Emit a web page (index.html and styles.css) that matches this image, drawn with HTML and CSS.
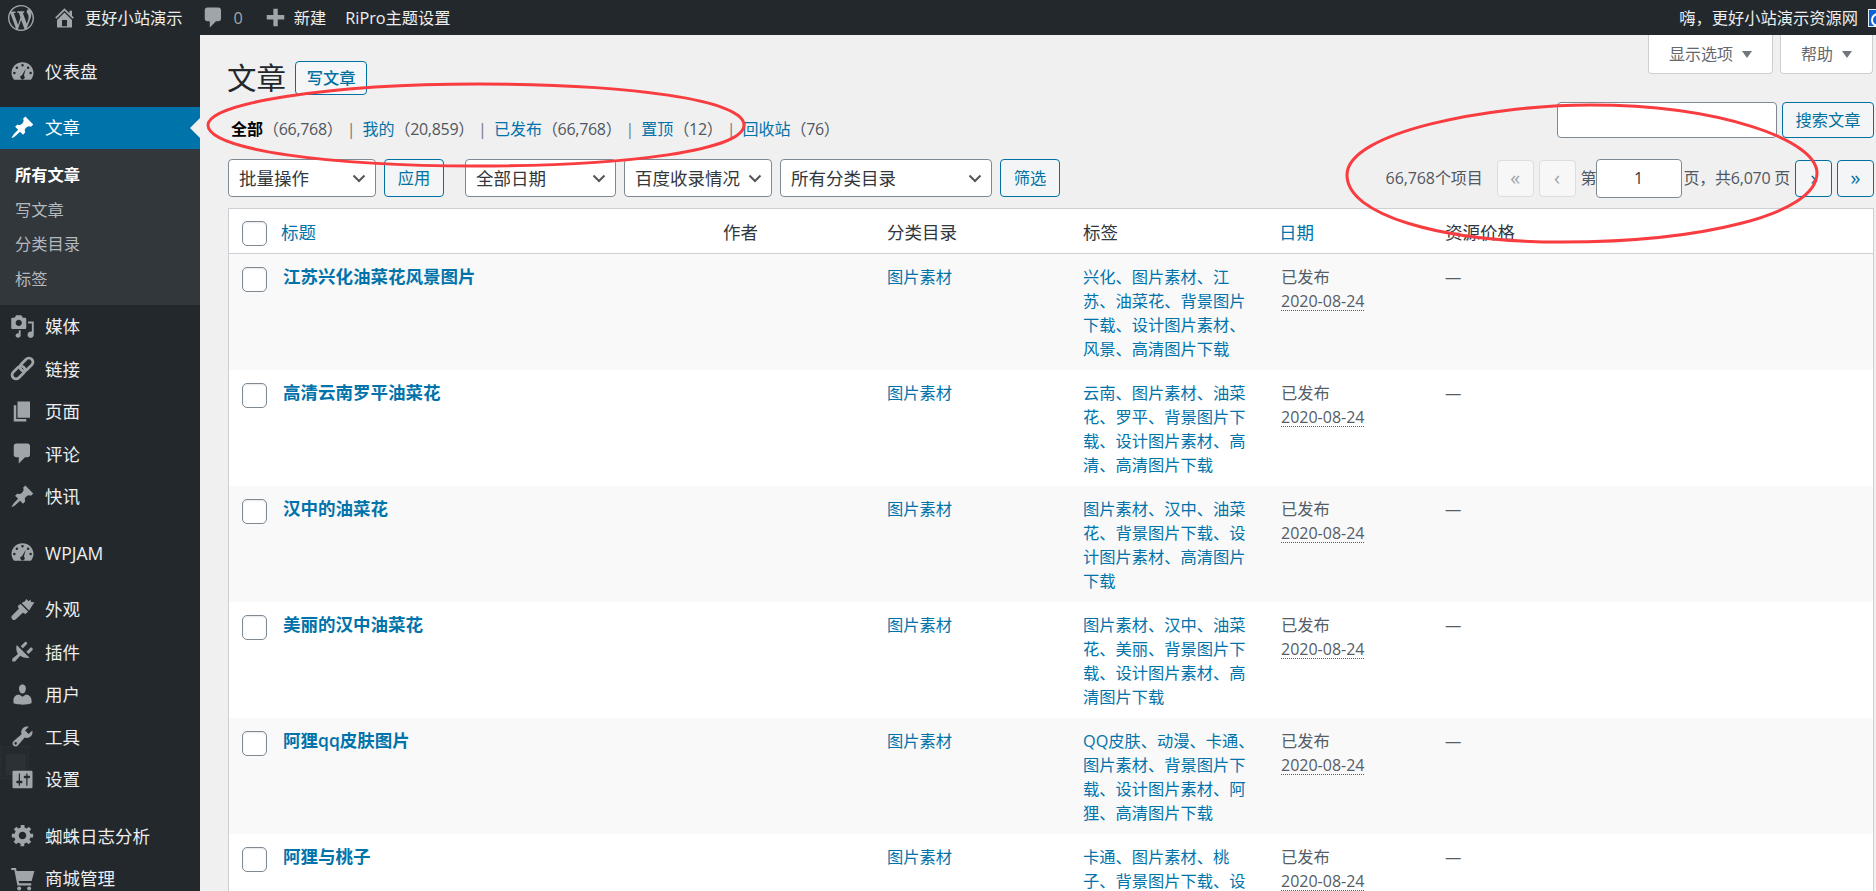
FILE: index.html
```html
<!DOCTYPE html>
<html lang="zh-CN">
<head>
<meta charset="utf-8">
<title>文章</title>
<link rel="stylesheet" href="styles.css">
</head>
<body>
<svg class="defs" width="0" height="0" aria-hidden="true">
  <symbol id="i-wp" viewBox="0 0 20 20"><path d="M20 10c0-5.510-4.490-10-10-10C4.480 0 0 4.490 0 10c0 5.520 4.480 10 10 10 5.510 0 10-4.480 10-10zM7.780 15.370L4.370 6.220c.550-.020 1.170-.080 1.170-.080.500-.060.440-1.130-.060-1.110 0 0-1.450.110-2.370.110-.180 0-.370 0-.580-.010C4.120 2.690 6.890 1.030 10 1.030c2.330 0 4.450.870 6.050 2.340-.680-.110-1.650.390-1.650 1.580 0 .740.450 1.360.900 2.100.350.610.550 1.360.550 2.460 0 1.490-1.400 5-1.400 5l-3.030-8.370c.540-.020.820-.170.820-.170.500-.050.440-1.250-.060-1.220 0 0-1.440.120-2.380.120-.870 0-2.330-.120-2.330-.120-.500-.030-.560 1.200-.060 1.220l.920.080 1.260 3.410zM17.410 10c.240-.640.740-1.870.430-4.250.700 1.290 1.050 2.710 1.050 4.250 0 3.290-1.730 6.240-4.400 7.780.970-2.590 1.940-5.200 2.920-7.780zM6.100 18.090C3.120 16.650 1.110 13.530 1.110 10c0-1.300.230-2.480.720-3.590C3.250 10.300 4.670 14.200 6.100 18.090zm4.030-6.630l2.580 6.980c-.840.300-1.740.460-2.710.460-.820 0-1.620-.110-2.370-.340.850-2.490 1.680-4.820 2.500-7.100z"/></symbol>
  <symbol id="i-home" viewBox="0 0 20 20"><path fill-rule="evenodd" d="M16 8.500l1.530 1.530-1.060 1.060L10 4.620l-6.470 6.470-1.060-1.060L10 2.500l4 4v-2h2v4zm-6-2.460l6 5.990V18H4v-5.970zM12 17v-5H8v5h4z"/></symbol>
  <symbol id="i-comment" viewBox="0 0 20 20"><path d="M5 2h9c1.100 0 2 .900 2 2v7c0 1.100-.900 2-2 2h-2l-5 5v-5H5c-1.100 0-2-.900-2-2V4c0-1.100.900-2 2-2z"/></symbol>
  <symbol id="i-plus" viewBox="0 0 20 20"><path d="M17 8v3.500h-5.200V17H8.300v-5.500H3V8h5.300V3h3.500v5z"/></symbol>
  <symbol id="i-dash" viewBox="0 0 20 20"><path fill-rule="evenodd" d="M3.300 16.500h13.400c1.300-1.500 2.100-3.400 2.100-5.500 0-4.700-3.900-8.500-8.800-8.500S1.200 6.300 1.200 11c0 2.100.800 4 2.100 5.500zM9.800 4a1 1 0 1 1 .4 2 1 1 0 0 1-.4-2zM5.500 6a1 1 0 1 1 0 2 1 1 0 0 1 0-2zM14.500 6a1 1 0 1 1 0 2 1 1 0 0 1 0-2zM3.500 10.200a1 1 0 1 1 0 2 1 1 0 0 1 0-2zM16.500 10.200a1 1 0 1 1 0 2 1 1 0 0 1 0-2zM12.600 7.800l-1.500 5.500a1.700 1.700 0 1 1-1.500-.4z"/></symbol>
  <symbol id="i-pin" viewBox="0 0 20 20"><path d="M10.440 3.020l1.820-1.820 6.360 6.350-1.830 1.820c-1.050-.680-2.480-.570-3.410.360l-.750.750c-.920.930-1.040 2.350-.350 3.410l-1.830 1.820-2.410-2.410-2.800 2.790c-.420.420-3.380 2.710-3.800 2.290s1.860-3.390 2.280-3.810l2.790-2.790L4.100 9.360l1.830-1.820c1.050.690 2.480.570 3.400-.360l.750-.750c.930-.920 1.050-2.350.360-3.410z"/></symbol>
  <symbol id="i-media" viewBox="0 0 20 20"><path fill-rule="evenodd" d="M13 11V4c0-.550-.450-1-1-1h-1.670L9 1H5L3.670 3H2c-.550 0-1 .450-1 1v7c0 .550.450 1 1 1h10c.550 0 1-.450 1-1zM7 4.500c1.380 0 2.500 1.120 2.500 2.500S8.380 9.500 7 9.500 4.500 8.380 4.500 7 5.620 4.500 7 4.500zM14.500 6H19v10.500c0 1.380-1.120 2.500-2.500 2.500S14 17.880 14 16.500s1.120-2.500 2.500-2.500c.400 0 .700.100 1 .200V7.600h-3zM8.500 13v4.200c0 1-.900 1.800-2 1.800s-2-.800-2-1.800.900-1.800 2-1.800c.200 0 .400 0 .500.100V13z"/></symbol>
  <symbol id="i-link" viewBox="0 0 20 20"><g fill="none" stroke="currentColor" stroke-width="2.200" transform="rotate(-45 10 10)"><rect x="-0.500" y="6.800" width="12" height="6.400" rx="3.200"/><rect x="8.500" y="6.800" width="12" height="6.400" rx="3.200"/></g></symbol>
  <symbol id="i-pages" viewBox="0 0 20 20"><path d="M6 15V2h10v13H6zm-1 1h8v2H3V5h2v11z"/></symbol>
  <symbol id="i-brush" viewBox="0 0 20 20"><path d="M9.300 4.700l6 6 4.200-6.500-2.600-.200-.600-2-1.400 1.300L13 1.500l-1 1.800zM8.500 5.500l6 6-2 2-2.300-1-5.700 5.500c-.700.600-1.900.500-2.700-.300s-.900-2-.300-2.700l5.600-5.700-1-2.200z"/></symbol>
  <symbol id="i-plug" viewBox="0 0 20 20"><path d="M13.500 4.200L10.300 7.400 8.600 5.700l3.200-3.200c.400-.400 1.100-.300 1.500.100s.600 1.200.200 1.600zM18 8.700l-3.200 3.200-1.700-1.700 3.200-3.200c.400-.400 1.100-.300 1.500.100s.600 1.200.200 1.600zM5.400 4.800l10.200 10.200c-1.900.600-5.200-.100-7.400-1.600L4 18H1.800v-2.200l4.500-3.900C4.900 9.700 4.700 6.700 5.400 4.800z"/></symbol>
  <symbol id="i-user" viewBox="0 0 20 20"><path d="M10 9.250c-2.270 0-2.730-3.440-2.730-3.440C7 4.020 7.820 2 9.970 2c2.160 0 2.980 2.020 2.710 3.810 0 0-.410 3.440-2.680 3.440zm0 2.570L12.720 10c2.390 0 4.520 2.330 4.520 4.530v2.490s-3.650 1.130-7.240 1.130c-3.650 0-7.240-1.130-7.240-1.130v-2.490c0-2.250 1.940-4.480 4.470-4.480z"/></symbol>
  <symbol id="i-tool" viewBox="0 0 20 20"><path fill-rule="evenodd" d="M16.680 9.770c-1.340 1.340-3.300 1.670-4.950.990l-5.410 6.520c-.990.990-2.590.990-3.570 0-.990-.990-.990-2.590 0-3.570l6.520-5.420c-.680-1.650-.350-3.610.990-4.950 1.280-1.280 3.120-1.620 4.720-1.060l-2.890 2.890 2.820 2.820 2.860-2.870c.530 1.580.180 3.390-1.090 4.650zM3.810 16.210c.400.390 1.030.390 1.420 0 .400-.400.400-1.030 0-1.430-.390-.390-1.020-.390-1.420 0-.390.400-.390 1.030 0 1.430z"/></symbol>
  <symbol id="i-set" viewBox="0 0 20 20"><path fill-rule="evenodd" d="M18 16V4c0-.550-.450-1-1-1H3c-.550 0-1 .450-1 1v12c0 .550.450 1 1 1h14c.550 0 1-.450 1-1zM8 11h1c.550 0 1 .450 1 1s-.450 1-1 1H8v1.500c0 .280-.220.500-.500.500s-.500-.220-.500-.500V13H6c-.550 0-1-.450-1-1s.450-1 1-1h1V5.500c0-.280.220-.500.500-.500s.500.220.500.500V11zm5-2h-1c-.550 0-1-.450-1-1s.450-1 1-1h1V5.500c0-.280.220-.500.500-.500s.500.220.500.500V7h1c.550 0 1 .450 1 1s-.450 1-1 1h-1v5.500c0 .280-.220.500-.500.500s-.500-.220-.500-.500V9z"/></symbol>
  <symbol id="i-gear" viewBox="0 0 20 20"><path fill-rule="evenodd" d="M18.500 11.500h-2.180c-.170.700-.470 1.350-.860 1.930l1.540 1.540-2.120 2.120-1.540-1.540c-.580.390-1.230.690-1.930.860V18.500h-3v-2.090c-.700-.170-1.350-.470-1.930-.860l-1.540 1.540-2.120-2.120 1.540-1.540c-.390-.580-.690-1.230-.860-1.930H1.500v-3h2.180c.170-.700.470-1.350.860-1.930L3 5.030l2.120-2.120 1.540 1.540c.580-.390 1.230-.690 1.930-.860V1.500h3v2.090c.700.170 1.350.470 1.930.860l1.540-1.540L17 5.030l-1.540 1.540c.390.580.690 1.230.860 1.930h2.180v3zM10 13c1.660 0 3-1.340 3-3s-1.340-3-3-3-3 1.340-3 3 1.340 3 3 3z"/></symbol>
  <symbol id="i-cart" viewBox="0 0 20 20"><path d="M1 1.500h3.800l.5 2.500H19.500l-2.200 8H7l.4 1.800H17v1.700H5.900L3.500 3.200H1z"/><circle cx="7.300" cy="18" r="1.600"/><circle cx="15.300" cy="18" r="1.600"/></symbol>
</svg>

<header class="adminbar">
  <div class="bar-left">
    <svg class="bar-logo"><use href="#i-wp"/></svg>
    <span class="bar-item bar-site"><svg class="bar-icon"><use href="#i-home"/></svg>更好小站演示</span>
    <span class="bar-item bar-comments"><svg class="bar-icon"><use href="#i-comment"/></svg><span class="bar-count">0</span></span>
    <span class="bar-item bar-new"><svg class="bar-icon"><use href="#i-plus"/></svg>新建</span>
    <span class="bar-item">RiPro主题设置</span>
  </div>
  <div class="bar-right">
    <span>嗨，更好小站演示资源网</span>
    <span class="avatar"></span>
  </div>
</header>

<div class="layout">
  <aside class="sidebar">
    <nav>
      <a class="menu-item"><svg class="menu-icon"><use href="#i-dash"/></svg>仪表盘</a>
      <a class="menu-item current gap"><svg class="menu-icon"><use href="#i-pin"/></svg>文章</a>
      <div class="submenu">
        <a class="sub-item active">所有文章</a>
        <a class="sub-item">写文章</a>
        <a class="sub-item">分类目录</a>
        <a class="sub-item">标签</a>
      </div>
      <a class="menu-item"><svg class="menu-icon"><use href="#i-media"/></svg>媒体</a>
      <a class="menu-item"><svg class="menu-icon"><use href="#i-link"/></svg>链接</a>
      <a class="menu-item"><svg class="menu-icon"><use href="#i-pages"/></svg>页面</a>
      <a class="menu-item"><svg class="menu-icon"><use href="#i-comment"/></svg>评论</a>
      <a class="menu-item"><svg class="menu-icon"><use href="#i-pin"/></svg>快讯</a>
      <a class="menu-item gap"><svg class="menu-icon"><use href="#i-dash"/></svg>WPJAM</a>
      <a class="menu-item gap"><svg class="menu-icon"><use href="#i-brush"/></svg>外观</a>
      <a class="menu-item"><svg class="menu-icon"><use href="#i-plug"/></svg>插件</a>
      <a class="menu-item"><svg class="menu-icon"><use href="#i-user"/></svg>用户</a>
      <a class="menu-item"><svg class="menu-icon"><use href="#i-tool"/></svg>工具</a>
      <a class="menu-item"><svg class="menu-icon"><use href="#i-set"/></svg>设置</a>
      <a class="menu-item gap"><svg class="menu-icon"><use href="#i-gear"/></svg>蜘蛛日志分析</a>
      <a class="menu-item"><svg class="menu-icon"><use href="#i-cart"/></svg>商城管理</a>
    </nav>
    <div class="ghost"><div class="ghost-inner"></div></div>
  </aside>

  <main class="content">
    <div class="head">
      <div class="head-left">
        <div class="heading">
          <h1>文章</h1>
          <a class="btn add-new">写文章</a>
        </div>
        <ul class="views">
          <li><a class="view-current">全部</a><span class="count">（66,768）</span> |</li>
          <li><a>我的</a><span class="count">（20,859）</span> |</li>
          <li><a>已发布</a><span class="count">（66,768）</span> |</li>
          <li><a>置顶</a><span class="count">（12）</span> |</li>
          <li><a>回收站</a><span class="count">（76）</span></li>
        </ul>
      </div>
      <div class="head-right">
        <div class="screen-links">
          <span class="tab tab-options">显示选项<svg class="tri" viewBox="0 0 10 7"><path d="M0 0h10L5 7z"/></svg></span>
          <span class="tab tab-help">帮助<svg class="tri" viewBox="0 0 10 7"><path d="M0 0h10L5 7z"/></svg></span>
        </div>
        <div class="search">
          <input class="search-input" type="text">
          <a class="btn search-btn">搜索文章</a>
        </div>
      </div>
    </div>

    <div class="tablenav">
      <div class="actions">
        <select class="sel sel-bulk"><option>批量操作</option></select>
        <a class="btn apply">应用</a>
        <select class="sel sel-date"><option>全部日期</option></select>
        <select class="sel sel-baidu"><option>百度收录情况</option></select>
        <select class="sel sel-cat"><option>所有分类目录</option></select>
        <a class="btn apply">筛选</a>
      </div>
      <div class="pages">
        <span class="total">66,768个项目</span>
        <span class="page-btn disabled">«</span>
        <span class="page-btn disabled">‹</span>
        <span class="page-label">第</span>
        <input class="page-input" type="text" value="1">
        <span class="page-of">页，共6,070 页</span>
        <a class="page-btn">›</a>
        <a class="page-btn">»</a>
      </div>
    </div>

    <table class="posts">
      <colgroup>
        <col class="c-check"><col class="c-title"><col class="c-author"><col class="c-cat"><col class="c-tags"><col class="c-date"><col>
      </colgroup>
      <thead>
        <tr>
          <th class="check"><span class="box"></span></th>
          <th class="th-title"><a>标题</a></th>
          <th>作者</th>
          <th>分类目录</th>
          <th>标签</th>
          <th><a>日期</a></th>
          <th>资源价格</th>
        </tr>
      </thead>
      <tbody>
        <tr>
          <td class="check"><span class="box"></span></td>
          <td><a class="row-title">江苏兴化油菜花风景图片</a></td>
          <td></td>
          <td><a>图片素材</a></td>
          <td><a>兴化、图片素材、江苏、油菜花、背景图片下载、设计图片素材、风景、高清图片下载</a></td>
          <td class="date">已发布<br><abbr>2020-08-24</abbr></td>
          <td>—</td>
        </tr>
        <tr>
          <td class="check"><span class="box"></span></td>
          <td><a class="row-title">高清云南罗平油菜花</a></td>
          <td></td>
          <td><a>图片素材</a></td>
          <td><a>云南、图片素材、油菜花、罗平、背景图片下载、设计图片素材、高清、高清图片下载</a></td>
          <td class="date">已发布<br><abbr>2020-08-24</abbr></td>
          <td>—</td>
        </tr>
        <tr>
          <td class="check"><span class="box"></span></td>
          <td><a class="row-title">汉中的油菜花</a></td>
          <td></td>
          <td><a>图片素材</a></td>
          <td><a>图片素材、汉中、油菜花、背景图片下载、设计图片素材、高清图片下载</a></td>
          <td class="date">已发布<br><abbr>2020-08-24</abbr></td>
          <td>—</td>
        </tr>
        <tr>
          <td class="check"><span class="box"></span></td>
          <td><a class="row-title">美丽的汉中油菜花</a></td>
          <td></td>
          <td><a>图片素材</a></td>
          <td><a>图片素材、汉中、油菜花、美丽、背景图片下载、设计图片素材、高清图片下载</a></td>
          <td class="date">已发布<br><abbr>2020-08-24</abbr></td>
          <td>—</td>
        </tr>
        <tr>
          <td class="check"><span class="box"></span></td>
          <td><a class="row-title">阿狸qq皮肤图片</a></td>
          <td></td>
          <td><a>图片素材</a></td>
          <td><a>QQ皮肤、动漫、卡通、图片素材、背景图片下载、设计图片素材、阿狸、高清图片下载</a></td>
          <td class="date">已发布<br><abbr>2020-08-24</abbr></td>
          <td>—</td>
        </tr>
        <tr>
          <td class="check"><span class="box"></span></td>
          <td><a class="row-title">阿狸与桃子</a></td>
          <td></td>
          <td><a>图片素材</a></td>
          <td><a>卡通、图片素材、桃子、背景图片下载、设计图片素材、高清图片下载</a></td>
          <td class="date">已发布<br><abbr>2020-08-24</abbr></td>
          <td>—</td>
        </tr>
      </tbody>
    </table>
  </main>
</div>

<svg class="marks" viewBox="0 0 1876 891" aria-hidden="true">
  <path d="M208 125C208 103 330 84 478 84C630 84 744 100 744 125C744 150 630 166 475 166C330 166 208 150 208 125Z"/>
  <path d="M1347 175C1347 132 1490 105 1590 105C1720 105 1817 140 1817 173C1817 215 1700 242 1562 242C1440 242 1347 215 1347 175Z"/>
</svg>
</body>
</html>
```

FILE: styles.css
```css
* { box-sizing: border-box; }
html, body { margin: 0; height: 100%; overflow: hidden; }
body {
  position: relative;
  background: #f0f0f1;
  color: #444;
  font-family: "Open Sans", "Noto Sans CJK SC", sans-serif;
  font-size: 16px;
  line-height: 24px;
}
a { color: #0073aa; text-decoration: none; }
.defs { position: absolute; }

/* admin bar */
.adminbar {
  display: flex;
  justify-content: space-between;
  align-items: center;
  height: 35px;
  background: #23282d;
  color: #eee;
  font-size: 16.25px;
}
.bar-left, .bar-right, .bar-item { display: flex; align-items: center; }
.bar-logo { width: 26px; height: 26px; margin-left: 8px; margin-right: 18px; fill: #a0a5aa; }
.bar-icon { width: 25px; height: 25px; fill: #a0a5aa; }
.bar-site .bar-icon { margin-right: 8px; }
.bar-site { margin-right: 18px; }
.bar-comments { margin-right: 20px; }
.bar-count { color: #a0a5aa; margin-left: 8px; }
.bar-new { margin-right: 19px; }
.bar-new .bar-icon { margin-right: 6px; }
.avatar {
  position: relative;
  flex: none;
  width: 18px;
  height: 18px;
  margin-left: 10px;
  margin-right: -10px;
  background: #0a62d6;
  border: 1px solid #e8eef6;
}
.avatar::after {
  content: "";
  position: absolute;
  left: 2px;
  top: 3px;
  width: 10px;
  height: 10px;
  border: 2px solid #fff;
  border-radius: 50%;
}

/* layout */
.layout { display: flex; height: calc(100% - 35px); }
.sidebar {
  position: relative;
  flex: none;
  width: 200px;
  padding-top: 15px;
  background: #23282d;
}
.menu-item {
  position: relative;
  display: flex;
  align-items: center;
  height: 42.5px;
  padding-left: 10px;
  color: #eee;
  font-size: 17.5px;
}
.menu-item.gap { margin-top: 14px; }
.menu-icon { flex: none; width: 25px; height: 25px; margin-right: 10px; fill: #a0a5aa; color: #a0a5aa; }
.menu-item.current { padding-bottom: 1px; background: #0073aa; color: #fff; }
.current .menu-icon { fill: #fff; }
.menu-item.current::after {
  content: "";
  position: absolute;
  right: 0;
  top: 11px;
  border: 10px solid transparent;
  border-left-width: 0;
  border-right-color: #f0f0f1;
}
.submenu { padding: 9px 0; background: #32373c; }
.sub-item {
  display: block;
  height: 34.5px;
  padding-left: 15px;
  color: #b4b9be;
  font-size: 16.25px;
  line-height: 34.5px;
}
.sub-item.active { color: #fff; font-weight: 600; }
.ghost {
  position: absolute;
  left: 0;
  top: 711px;
  width: 29px;
  height: 33px;
  padding: 7px 2px 3px 5px;
  background: rgba(255, 255, 255, 0.012);
  border: 1px solid rgba(255, 255, 255, 0.02);
}
.ghost-inner { height: 100%; background: rgba(255, 255, 255, 0.035); }

/* content */
.content { flex: 1; min-width: 0; padding: 0 2px 0 28px; }
.head { display: flex; justify-content: space-between; }
.heading { display: flex; padding-top: 26px; }
h1 {
  margin: 0 0 0 -1px;
  color: #23282d;
  font-size: 29.5px;
  font-weight: 400;
  line-height: 34px;
}
.btn {
  display: flex;
  align-items: center;
  justify-content: center;
  background: #f3f5f6;
  border: 1px solid #0071a1;
  border-radius: 4px;
  color: #0071a1;
  font-size: 16.25px;
}
.add-new { width: 72px; height: 34px; margin-left: 9px; background: #f5f6f7; font-weight: 500; }
.views { display: flex; margin: 22px 0 0; padding: 0 0 0 3px; list-style: none; color: #72777c; font-size: 16px; white-space: pre; }
.views li { margin-right: 7px; }
.view-current { color: #000; font-weight: 600; }
.count { color: #50575e; letter-spacing: -0.3px; }

.screen-links { display: flex; justify-content: flex-end; gap: 7px; height: 39px; padding-right: 1px; }
.tab {
  display: flex;
  align-items: center;
  justify-content: center;
  gap: 9px;
  height: 39px;
  background: #fff;
  border: 1px solid #ccd0d4;
  border-top: 0;
  border-radius: 0 0 4px 4px;
  color: #646970;
  font-size: 16px;
}
.tab-options { width: 125px; }
.tab-help { width: 93px; }
.tri { width: 10px; height: 7px; fill: #72777c; }
.search { display: flex; gap: 5px; margin-top: 28px; }
.search-input {
  width: 220px;
  height: 36px;
  background: #fff;
  border: 1px solid #7e8993;
  border-radius: 4px;
}
.search-btn { width: 92px; height: 36px; }

.tablenav { display: flex; justify-content: space-between; align-items: center; margin-top: 18px; height: 38px; }
.actions { display: flex; gap: 8px; }
.sel {
  height: 38px;
  padding: 0 24px 0 10px;
  appearance: none;
  background: #fff url("data:image/svg+xml,%3Csvg xmlns='http://www.w3.org/2000/svg' width='14' height='9' viewBox='0 0 14 9'%3E%3Cpath d='M1.500 1.500L7 7l5.500-5.500' fill='none' stroke='%23555' stroke-width='2'/%3E%3C/svg%3E") no-repeat right 9px center;
  border: 1px solid #7e8993;
  border-radius: 4px;
  color: #32373c;
  font-family: inherit;
  font-size: 17.5px;
}
.sel-bulk { width: 148px; }
.sel-date { width: 151px; margin-left: 13px; }
.sel-baidu { width: 148px; }
.sel-cat { width: 212px; }
.apply { width: 60px; height: 38px; }

.pages { display: flex; align-items: center; }
.total { margin-right: 14px; color: #50575e; letter-spacing: -0.1px; }
.page-btn {
  display: flex;
  align-items: center;
  justify-content: center;
  width: 37px;
  height: 37px;
  margin-right: 5px;
  background: #f3f5f6;
  border: 1px solid #0071a1;
  border-radius: 4px;
  color: #0071a1;
  font-size: 20px;
}
.page-btn:last-child { margin-right: 0; }
.page-btn.disabled { background: #f7f7f7; border-color: #ddd; color: #a0a5aa; }
.page-label { width: 15px; color: #50575e; }
.page-input {
  width: 86px;
  height: 39px;
  background: #fff;
  border: 1px solid #7e8993;
  border-radius: 4px;
  color: #32373c;
  font-family: inherit;
  font-size: 16px;
  text-align: center;
}
.page-of { margin: 0 5px 0 2px; color: #50575e; letter-spacing: -0.25px; white-space: nowrap; }

/* table */
.posts {
  width: 100%;
  margin-top: 11px;
  table-layout: fixed;
  border-collapse: separate;
  border-spacing: 0;
  background: #fff;
  border: 1px solid #ccd0d4;
}
.c-check { width: 42px; }
.c-title { width: 440px; }
.c-author { width: 164px; }
.c-cat { width: 196px; }
.c-tags { width: 196px; }
.c-date { width: 166px; }
th {
  padding: 11px 12px 9px;
  border-bottom: 1px solid #ccd0d4;
  color: #32373c;
  font-size: 17.5px;
  font-weight: 400;
  text-align: left;
}
th.th-title { padding-left: 10px; }
td {
  padding: 11px 12px 9px;
  color: #555d66;
  font-size: 16.25px;
  vertical-align: top;
}
td.date { padding-left: 14px; }
th.check { padding: 12px 0 7px 13px; }
td.check { padding: 13px 0 0 13px; }
tbody tr:nth-child(odd) { background: #f9f9f9; }
.box {
  display: block;
  width: 25px;
  height: 25px;
  background: #fff;
  border: 1px solid #7e8993;
  border-radius: 5px;
  box-shadow: inset 0 1px 2px rgba(0, 0, 0, 0.1);
}
.row-title { display: block; margin-top: -1px; font-size: 17.5px; font-weight: 600; }
abbr { display: inline-block; height: 20px; border-bottom: 1px dotted #555d66; font-size: 16px; line-height: 20px; }

/* hand-drawn annotation */
.marks {
  position: absolute;
  left: 0;
  top: 0;
  width: 1876px;
  height: 891px;
  pointer-events: none;
}
.marks path { fill: none; stroke: #f83c40; stroke-width: 3; }
```
